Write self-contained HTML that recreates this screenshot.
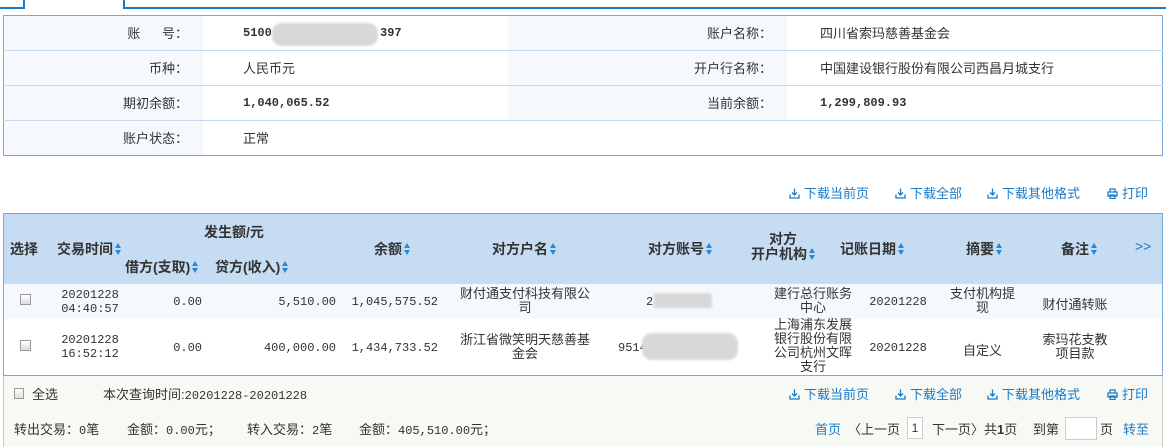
<!DOCTYPE html>
<html><head><meta charset="utf-8"><style>
*{margin:0;padding:0;box-sizing:border-box}
body{width:1166px;height:447px;position:relative;background:#fff;overflow:hidden;font-family:"Liberation Sans","Noto Sans CJK SC",sans-serif;font-size:13px;color:#333}
.a{position:absolute;white-space:nowrap}
.r{text-align:right}.c{text-align:center}
.m{font-family:"Liberation Mono","Noto Sans CJK SC",monospace;font-size:12px}
.b{font-weight:bold}
.h{font-weight:bold;font-size:14px;color:#333}
.blue{color:#1a7ac8}
.s{display:inline-block;width:6px;height:12px;vertical-align:-1px;margin-left:2px;position:relative}
.s:before{content:"";position:absolute;left:0;top:0;border-left:3px solid transparent;border-right:3px solid transparent;border-bottom:5px solid #2b86d4}
.s:after{content:"";position:absolute;left:0;top:7px;border-left:3px solid transparent;border-right:3px solid transparent;border-top:5px solid #2b86d4}
.cb{position:absolute;width:11px;height:11px;border:1px solid #999;background:linear-gradient(#fff,#ddd)}
.line{position:absolute;left:3px;width:1160px;height:1px;background:#c5daee}
.ico{display:inline-block;width:11px;height:11px;vertical-align:-1px;margin-right:4px}
.blur{position:absolute;background:#d8d8d8;border-radius:10px;filter:blur(1px)}
</style></head><body>
<div class="a" style="left:0;top:7px;width:25px;height:2px;background:#1a7ac8"></div>
<div class="a" style="left:23px;top:0;width:2px;height:9px;background:#1a7ac8"></div>
<div class="a" style="left:123px;top:0;width:2px;height:9px;background:#1a7ac8"></div>
<div class="a" style="left:123px;top:7px;width:1043px;height:2px;background:#1a7ac8"></div>

<div class="a" style="left:3px;top:15px;width:1160px;height:141px;border:1px solid #7aa7d6"></div>
<div class="a" style="left:4px;top:16px;width:199px;height:139px;background:#f5f9fd"></div>
<div class="a" style="left:508px;top:16px;width:279px;height:104px;background:#f5f9fd"></div>
<div class="line" style="top:50px"></div>
<div class="line" style="top:85px"></div>
<div class="line" style="top:120px"></div>
<div class="a r" style="left:100px;width:88px;top:23px">账&nbsp;&nbsp;&nbsp;&nbsp;&nbsp;&nbsp;号：</div>
<div class="a r" style="left:100px;width:88px;top:58px">币种：</div>
<div class="a r" style="left:100px;width:88px;top:93px">期初余额：</div>
<div class="a r" style="left:100px;width:88px;top:128px">账户状态：</div>
<div class="a m b" style="left:243px;top:26px">5100</div>
<div class="blur" style="left:272px;top:23px;width:106px;height:23px"></div>
<div class="a m b" style="left:380px;top:26px">397</div>
<div class="a" style="left:243px;top:58px">人民币元</div>
<div class="a m b" style="left:243px;top:96px">1,040,065.52</div>
<div class="a" style="left:243px;top:128px">正常</div>
<div class="a r" style="left:650px;width:122px;top:23px">账户名称：</div>
<div class="a r" style="left:650px;width:122px;top:58px">开户行名称：</div>
<div class="a r" style="left:650px;width:122px;top:93px">当前余额：</div>
<div class="a" style="left:820px;top:23px">四川省索玛慈善基金会</div>
<div class="a" style="left:820px;top:58px">中国建设银行股份有限公司西昌月城支行</div>
<div class="a m b" style="left:820px;top:96px">1,299,809.93</div>

<svg width="0" height="0" style="position:absolute"><defs>
<symbol id="dl" viewBox="0 0 11 11"><path d="M5.5 0.5V7M3 4.5L5.5 7L8 4.5M1 6.5V10H10V6.5" fill="none" stroke="#1a7ac8" stroke-width="1.3"/></symbol>
<symbol id="pr" viewBox="0 0 11 11"><path d="M3 3.5V1H8V3.5M1 4H10V8H1ZM3 7H8V10.5H3Z" fill="none" stroke="#1a7ac8" stroke-width="1.3"/></symbol>
</defs></svg>
<div class="a blue" style="left:789px;top:183px"><svg class="ico"><use href="#dl"/></svg>下载当前页</div>
<div class="a blue" style="left:895px;top:183px"><svg class="ico"><use href="#dl"/></svg>下载全部</div>
<div class="a blue" style="left:987px;top:183px"><svg class="ico"><use href="#dl"/></svg>下载其他格式</div>
<div class="a blue" style="left:1107px;top:183px"><svg class="ico"><use href="#pr"/></svg>打印</div>

<div class="a" style="left:3px;top:213px;width:1160px;height:163px;border:1px solid #7aa7d6"></div>
<div class="a" style="left:4px;top:214px;width:1158px;height:70px;background:#c6dcf2"></div>
<div class="a" style="left:4px;top:284px;width:1158px;height:35px;background:#f5f9fd"></div>
<div class="a h" style="left:10px;top:239px">选择</div>
<div class="a h" style="left:57px;top:239px">交易时间<span class="s"></span></div>
<div class="a h" style="left:204px;top:222px">发生额/元</div>
<div class="a h" style="left:125px;top:257px">借方(支取)<span class="s"></span></div>
<div class="a h" style="left:215px;top:257px">贷方(收入)<span class="s"></span></div>
<div class="a h" style="left:374px;top:239px">余额<span class="s"></span></div>
<div class="a h" style="left:492px;top:239px">对方户名<span class="s"></span></div>
<div class="a h" style="left:648px;top:239px">对方账号<span class="s"></span></div>
<div class="a h c" style="left:738px;width:90px;top:232px;line-height:15px">对方<br>开户机构<span class="s"></span></div>
<div class="a h" style="left:840px;top:239px">记账日期<span class="s"></span></div>
<div class="a h" style="left:966px;top:239px">摘要<span class="s"></span></div>
<div class="a h" style="left:1061px;top:239px">备注<span class="s"></span></div>
<div class="a blue" style="left:1135px;top:238px;font-size:14px">&gt;&gt;</div>

<div class="cb" style="left:20px;top:294px"></div>
<div class="a m c" style="left:50px;width:80px;top:288px;line-height:14px">20201228<br>04:40:57</div>
<div class="a m r" style="left:150px;width:52px;top:295px">0.00</div>
<div class="a m r" style="left:230px;width:106px;top:295px">5,510.00</div>
<div class="a m r" style="left:340px;width:98px;top:295px">1,045,575.52</div>
<div class="a c" style="left:450px;width:150px;top:287px;line-height:14px">财付通支付科技有限公<br>司</div>
<div class="a m" style="left:646px;top:295px">2</div>
<div class="blur" style="left:654px;top:293px;width:58px;height:15px;border-radius:2px"></div>
<div class="a c" style="left:760px;width:106px;top:287px;line-height:14px">建行总行账务<br>中心</div>
<div class="a m c" style="left:858px;width:80px;top:295px">20201228</div>
<div class="a c" style="left:945px;width:75px;top:287px;line-height:14px">支付机构提<br>现</div>
<div class="a c" style="left:1030px;width:90px;top:294px">财付通转账</div>

<div class="cb" style="left:20px;top:340px"></div>
<div class="a m c" style="left:50px;width:80px;top:333px;line-height:14px">20201228<br>16:52:12</div>
<div class="a m r" style="left:150px;width:52px;top:341px">0.00</div>
<div class="a m r" style="left:230px;width:106px;top:341px">400,000.00</div>
<div class="a m r" style="left:340px;width:98px;top:341px">1,434,733.52</div>
<div class="a c" style="left:450px;width:150px;top:333px;line-height:14px">浙江省微笑明天慈善基<br>金会</div>
<div class="a m" style="left:618px;top:341px">9514</div>
<div class="blur" style="left:642px;top:333px;width:96px;height:27px"></div>
<div class="a c" style="left:760px;width:106px;top:318px;line-height:14px">上海浦东发展<br>银行股份有限<br>公司杭州文晖<br>支行</div>
<div class="a m c" style="left:858px;width:80px;top:341px">20201228</div>
<div class="a c" style="left:945px;width:75px;top:340px">自定义</div>
<div class="a c" style="left:1030px;width:90px;top:333px;line-height:14px">索玛花支教<br>项目款</div>

<div class="a" style="left:3px;top:376px;width:1160px;height:71px;background:#f7f9f4;border-left:1px solid #ccc;border-right:1px solid #ccc"></div>
<div class="cb" style="left:14px;top:388px;width:10px;height:11px"></div>
<div class="a" style="left:32px;top:384px">全选</div>
<div class="a" style="left:103px;top:384px">本次查询时间:<span class="m">20201228-20201228</span></div>
<div class="a blue" style="left:789px;top:384px"><svg class="ico"><use href="#dl"/></svg>下载当前页</div>
<div class="a blue" style="left:895px;top:384px"><svg class="ico"><use href="#dl"/></svg>下载全部</div>
<div class="a blue" style="left:987px;top:384px"><svg class="ico"><use href="#dl"/></svg>下载其他格式</div>
<div class="a blue" style="left:1107px;top:384px"><svg class="ico"><use href="#pr"/></svg>打印</div>
<div class="a" style="left:14px;top:419px">转出交易：<span class="m">0</span>笔</div>
<div class="a" style="left:127px;top:419px">金额：<span class="m">0.00</span>元；</div>
<div class="a" style="left:247px;top:419px">转入交易：<span class="m">2</span>笔</div>
<div class="a" style="left:359px;top:419px">金额：<span class="m">405,510.00</span>元；</div>
<div class="a blue" style="left:815px;top:419px">首页</div>
<div class="a" style="left:848px;top:419px">〈上一页</div>
<div class="a" style="left:907px;top:417px;width:16px;height:22px;border:1px solid #ccc;background:#fff;text-align:center;line-height:20px;font-size:12px">1</div>
<div class="a" style="left:932px;top:419px">下一页〉共<b>1</b>页</div>
<div class="a" style="left:1033px;top:419px">到第</div>
<div class="a" style="left:1065px;top:417px;width:32px;height:23px;border:1px solid #ccc;background:#fff"></div>
<div class="a" style="left:1100px;top:419px">页</div>
<div class="a blue" style="left:1123px;top:419px">转至</div>
</body></html>
